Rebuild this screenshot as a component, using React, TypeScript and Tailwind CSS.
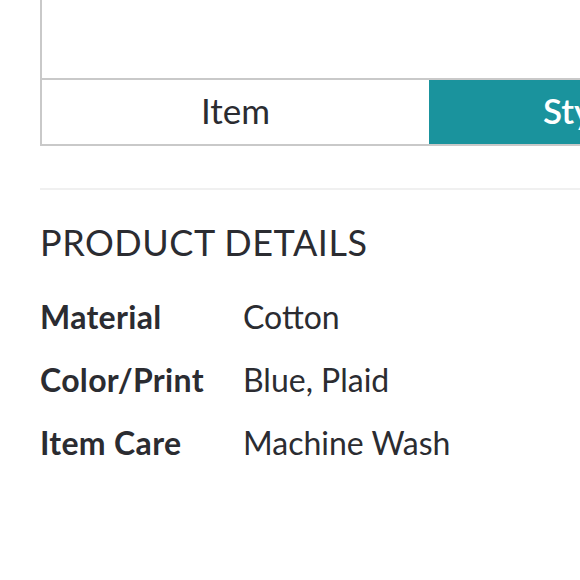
const details = [
  { label: 'Material', value: 'Cotton' },
  { label: 'Color/Print', value: 'Blue, Plaid' },
  { label: 'Item Care', value: 'Machine Wash' },
];

export default function App() {
  return (
    <div className="h-[580px] w-[580px] overflow-hidden bg-white pl-[40px] font-['Lato',sans-serif] text-[#2b2c31]">
      <div className="w-[778px] border-x-2 border-b-2 border-[#c9c9c9]">
        <div className="h-[80px] border-b-2 border-[#c9c9c9]" />
        <div className="flex h-[64px]">
          <button className="flex w-[387px] shrink-0 items-center justify-center bg-white pb-[3px] text-[35px]">
            Item
          </button>
          <button className="flex w-[387px] shrink-0 items-center justify-start bg-[#1a939d] pb-[3px] pl-[114px] text-[35px] font-semibold text-white">
            Style
          </button>
        </div>
      </div>

      <div className="mt-[42px] h-[2px] bg-[#f0f0f0]" />

      <h2 className="mt-[34px] text-[36px] leading-none tracking-[0.015em]">PRODUCT DETAILS</h2>

      <dl className="mt-[40px] flex flex-col gap-[30px]">
        {details.map((d) => (
          <div key={d.label} className="flex text-[32px] leading-[33px]">
            <dt className="w-[203px] font-bold tracking-[0.01em]">{d.label}</dt>
            <dd>{d.value}</dd>
          </div>
        ))}
      </dl>
    </div>
  );
}
